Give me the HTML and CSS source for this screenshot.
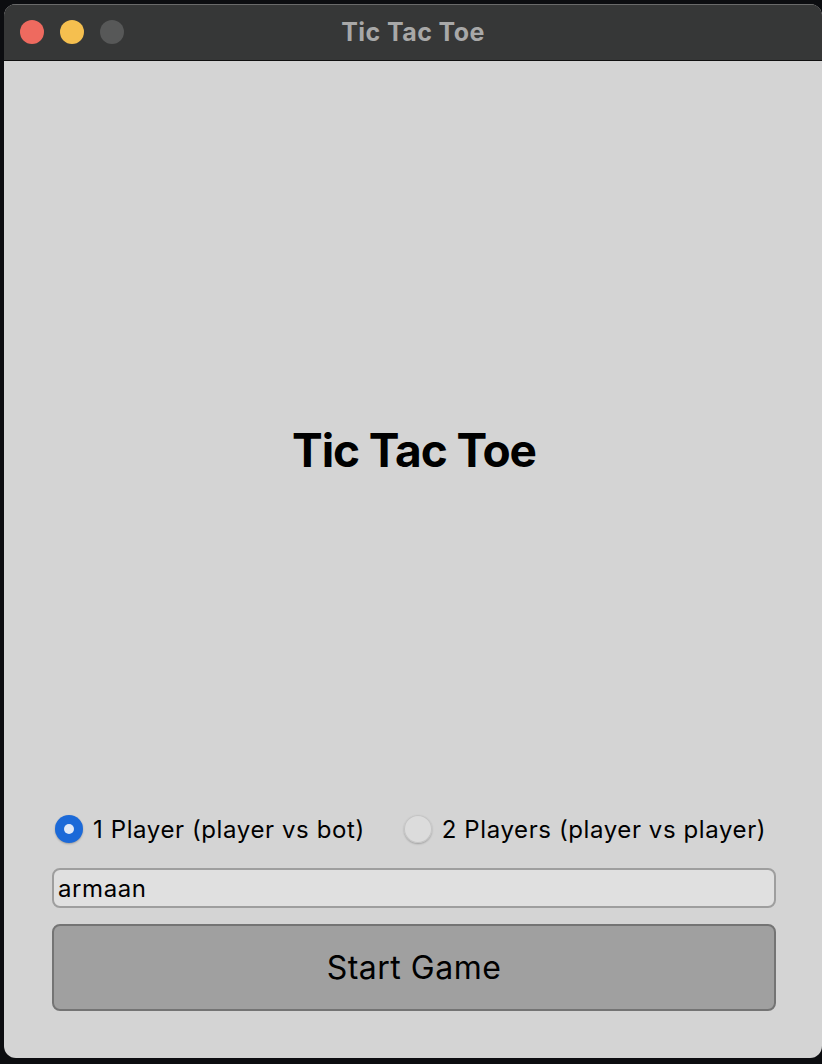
FILE: index.html
```html
<!DOCTYPE html>
<html>
<head>
<meta charset="utf-8">
<link rel="stylesheet" href="styles.css">
</head>
<body>
<div class="window">
  <div class="titlebar">
    <div class="lights">
      <span class="light red"></span>
      <span class="light yellow"></span>
      <span class="light grey"></span>
    </div>
    <div class="title">Tic Tac Toe</div>
  </div>
  <div class="content">
    <div class="hero"><h1 class="heading">Tic Tac Toe</h1></div>
    <div class="controls">
      <div class="radios">
        <label class="radio"><span class="dot checked"></span><span class="rlabel">1 Player (player vs bot)</span></label>
        <label class="radio"><span class="dot"></span><span class="rlabel">2 Players (player vs player)</span></label>
      </div>
      <div class="input">armaan</div>
      <div class="button">Start Game</div>
    </div>
  </div>
</div>
</body>
</html>
```
FILE: styles.css
```css
html, body {
  margin: 0;
  padding: 0;
  background: #0c0d10;
  width: 822px;
  height: 1064px;
  overflow: hidden;
  font-family: "Inter", "Liberation Sans", sans-serif;
}
.window {
  margin: 4px 0 0 4px;
  width: 818px;
  height: 1054px;
  border-radius: 12px;
  overflow: hidden;
  display: flex;
  flex-direction: column;
  background: #d4d4d4;
}
.titlebar {
  height: 57px;
  flex: none;
  background: #363737;
  border-top: 1px solid #6a6a6a;
  border-bottom: 1px solid #0f0f0f;
  box-sizing: border-box;
  display: flex;
  align-items: center;
  position: relative;
}
.lights {
  display: flex;
  gap: 16px;
  padding-left: 16px;
  margin-top: -2px;
}
.light {
  width: 24px;
  height: 24px;
  border-radius: 50%;
  display: block;
}
.red { background: #ee6a5f; }
.yellow { background: #f5bf4f; }
.grey { background: #575858; }
.title {
  position: absolute;
  left: 0;
  right: 0;
  top: 12px;
  text-align: center;
  font-weight: 700;
  font-size: 25px;
  color: #a8a8a8;
  letter-spacing: 0.4px;
}
.content {
  flex: 1;
  display: flex;
  flex-direction: column;
  padding: 0 46px 47px 48px;
}
.hero {
  flex: 1;
  display: flex;
  align-items: center;
  justify-content: center;
  padding-top: 24px;
}
.heading {
  margin: 0;
  font-size: 46px;
  font-weight: 700;
  color: #000;
  letter-spacing: -1.1px;
}
.controls {
  display: flex;
  flex-direction: column;
}
.radios {
  display: flex;
  align-items: center;
  gap: 39px;
  padding-left: 3px;
  height: 28px;
}
.radio {
  display: flex;
  align-items: center;
  gap: 10px;
  font-size: 24px;
  letter-spacing: 0.6px;
  color: #000;
}
.dot {
  width: 28px;
  height: 28px;
  border-radius: 50%;
  box-sizing: border-box;
  background: #dcdcdc;
  box-shadow: 0 1px 2px rgba(0,0,0,0.25), inset 0 0 0 1px #c4c4c4;
  display: flex;
  align-items: center;
  justify-content: center;
}
.dot.checked {
  background: #1b69d8;
  box-shadow: 0 1px 2px rgba(0,0,0,0.25);
}
.dot.checked::after {
  content: "";
  width: 10px;
  height: 10px;
  border-radius: 50%;
  background: #e1e9f7;
}
.input {
  margin-top: 25px;
  height: 40px;
  box-sizing: border-box;
  border: 2px solid #9e9e9e;
  border-radius: 8px;
  background: #e0e0e0;
  font-size: 24px;
  letter-spacing: 0.6px;
  padding-left: 4px;
  display: flex;
  align-items: center;
  color: #000;
}
.button {
  margin-top: 16px;
  height: 87px;
  box-sizing: border-box;
  border: 2px solid #747474;
  border-radius: 8px;
  background: #a0a0a0;
  font-size: 32px;
  letter-spacing: 0.5px;
  display: flex;
  align-items: center;
  justify-content: center;
  color: #000;
}
```
